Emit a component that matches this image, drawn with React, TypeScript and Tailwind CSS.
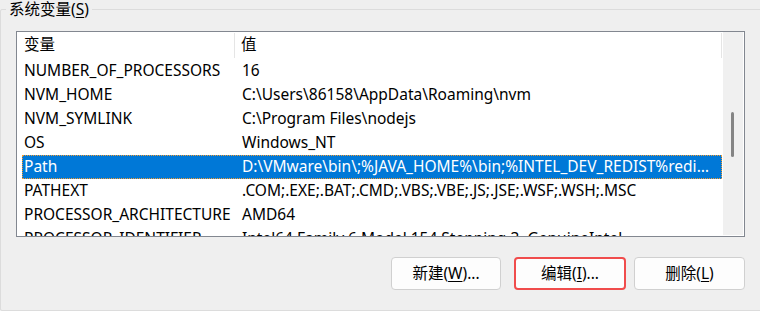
import React from 'react';

const rows: { name: string; value: string; selected?: boolean }[] = [
  { name: 'NUMBER_OF_PROCESSORS', value: '16' },
  { name: 'NVM_HOME', value: 'C:\\Users\\86158\\AppData\\Roaming\\nvm' },
  { name: 'NVM_SYMLINK', value: 'C:\\Program Files\\nodejs' },
  { name: 'OS', value: 'Windows_NT' },
  { name: 'Path', value: 'D:\\VMware\\bin\\;%JAVA_HOME%\\bin;%INTEL_DEV_REDIST%redist\\intel64\\compiler;C:\\Windows\\system32', selected: true },
  { name: 'PATHEXT', value: '.COM;.EXE;.BAT;.CMD;.VBS;.VBE;.JS;.JSE;.WSF;.WSH;.MSC' },
  { name: 'PROCESSOR_ARCHITECTURE', value: 'AMD64' },
  { name: 'PROCESSOR_IDENTIFIER', value: 'Intel64 Family 6 Model 154 Stepping 3, GenuineIntel' },
];

const Button: React.FC<{ label: string; hot: string; tail?: string; className?: string }> = ({ label, hot, tail = '', className = '' }) => (
  <button className={`h-[33px] rounded-[4px] bg-[#fdfdfd] text-[15.5px] text-black flex items-center justify-center ${className}`}>
    {label}(<span className="underline underline-offset-2">{hot}</span>){tail}
  </button>
);

export default function App() {
  return (
    <div
      className="w-[760px] h-[311px] overflow-hidden bg-[#efefef] relative"
      style={{ fontFamily: '"Noto Sans", "Noto Sans CJK SC", sans-serif' }}
    >
      <div className="relative mt-[9px] w-[800px] h-[302px] border border-[#dcdcdc] rounded-[2px]">
        <div className="absolute -top-[10px] left-[5px] px-[3px] bg-[#efefef] text-[15.5px] leading-[18px] text-black">
          系统变量(<span className="underline underline-offset-2">S</span>)
        </div>

        {/* list view */}
        <div className="ml-[15px] mt-[21px] w-[729px] h-[206px] border border-[#828790] bg-white flex overflow-hidden">
          <div className="w-[705px] h-full overflow-hidden text-[15.5px] text-black">
            <div className="h-[27px] flex items-center">
              <div className="w-[217px] pl-[7px] pb-[2px]">变量</div>
              <div className="w-px h-[25px] bg-[#e5e5e5]" />
              <div className="flex-1 pl-[6px] pb-[2px]">值</div>
              <div className="w-px h-[25px] bg-[#e5e5e5]" />
            </div>
            {rows.map((r) => (
              <div
                key={r.name}
                className={`ml-[5px] h-[24px] flex items-center whitespace-nowrap ${
                  r.selected ? 'bg-[#0078d7] text-white outline outline-1 outline-dotted outline-[#f39c32] -outline-offset-1' : ''
                }`}
              >
                <div className="w-[213px] pl-[2px] overflow-hidden">{r.name}</div>
                <div className="flex-1 min-w-0 pl-[7px] pr-[6px] truncate">{r.value}</div>
              </div>
            ))}
          </div>
          {/* scrollbar */}
          <div className="w-[22px] h-full bg-white pl-px pr-px pb-px">
            <div className="relative w-full h-full bg-[#f0f0f0]">
              <div className="absolute left-[8px] top-[80px] w-[3px] h-[45px] rounded-full bg-[#858585]" />
            </div>
          </div>
        </div>

        {/* buttons */}
        <div className="ml-[390px] mt-[20px] flex">
          <Button label="新建" hot="W" tail="..." className="w-[110px] border border-[#d0d0d0]" />
          <Button label="编辑" hot="I" tail="..." className="ml-[13px] w-[112px] border-2 border-[#f04c4c]" />
          <Button label="删除" hot="L" className="ml-[8px] w-[111px] border border-[#d0d0d0]" />
        </div>
      </div>
    </div>
  );
}
